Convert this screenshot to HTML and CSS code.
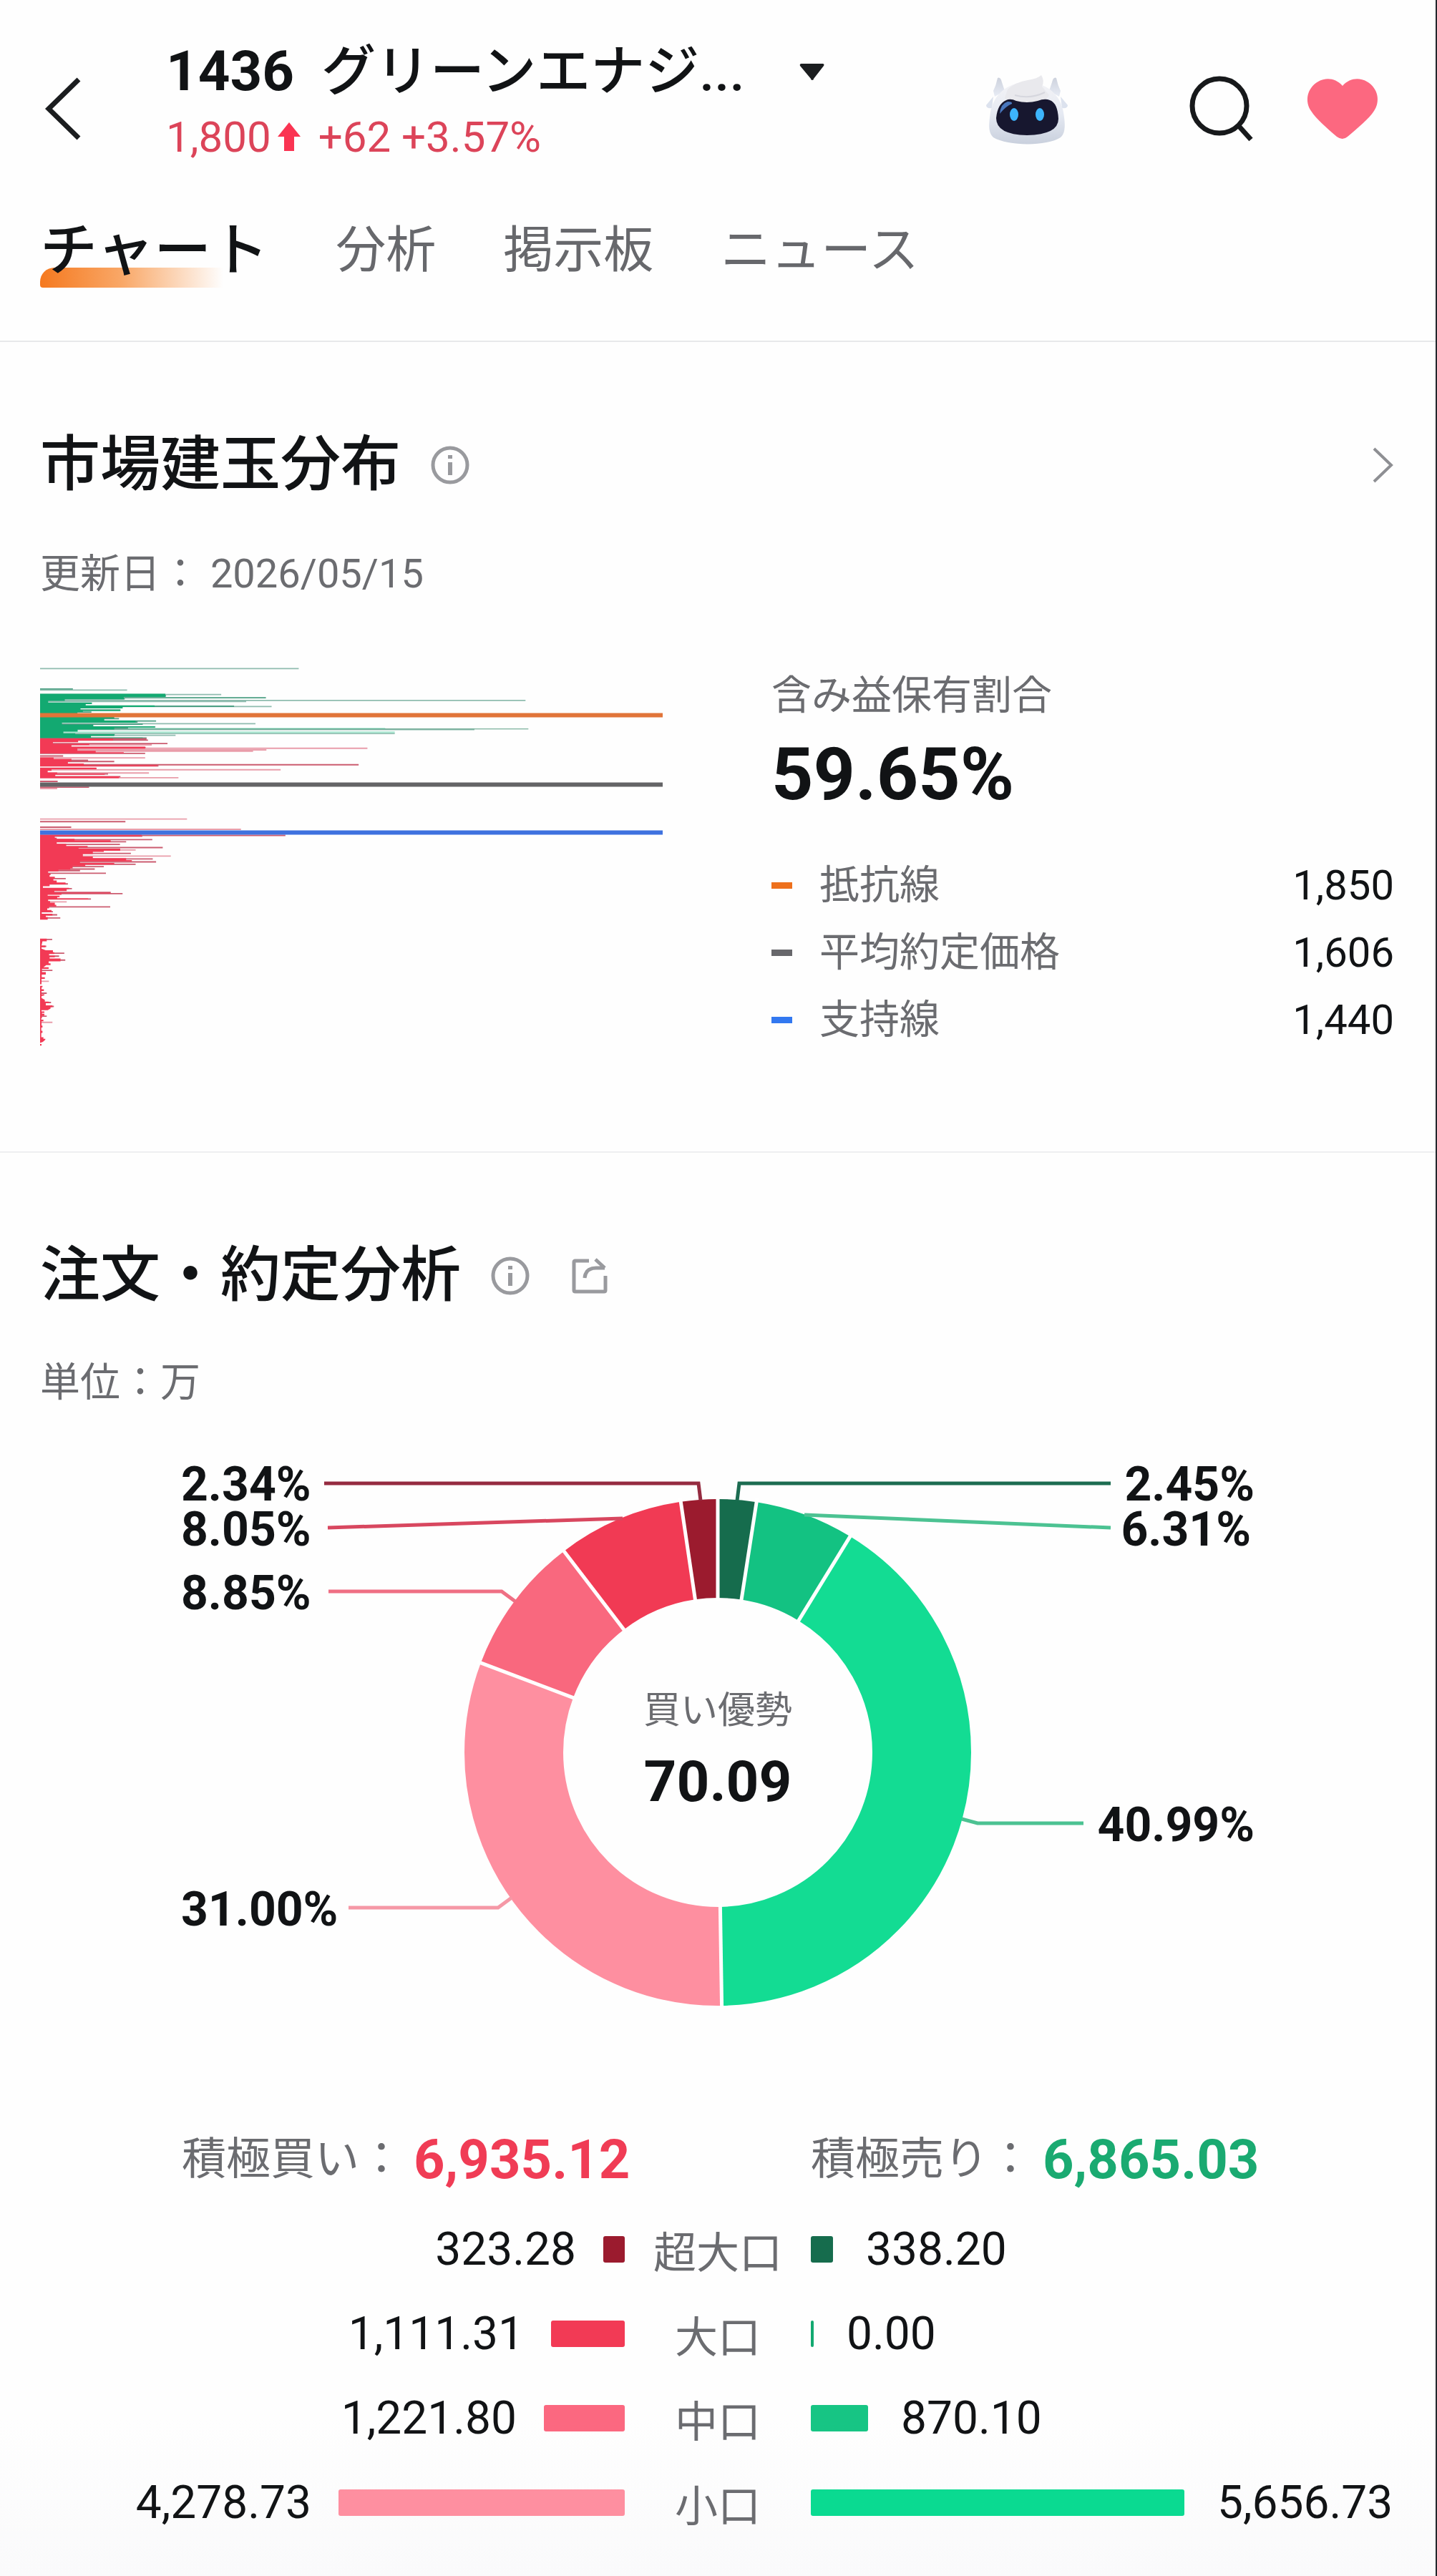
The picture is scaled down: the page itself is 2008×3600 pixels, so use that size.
FILE: index.html
```html
<!DOCTYPE html>
<html lang="ja">
<head>
<meta charset="utf-8">
<meta name="viewport" content="width=device-width, initial-scale=1">
<title>1436 グリーンエナジ...</title>
<link rel="stylesheet" href="styles.css">
</head>
<body>
<div class="app">
  <header class="topbar">
    <button class="icon-button" type="button" aria-label="戻る">
      <svg width="60" height="92" viewBox="0 0 60 92" fill="none" stroke="#1b1d1f" stroke-width="7"><path d="M54 5 12 46l42 41"/></svg>
    </button>
    <div class="quote">
      <button class="symbol" type="button">
        <span class="code">1436</span>
        <span class="name">グリーンエナジ...</span>
        <svg class="caret" width="36" height="24" viewBox="0 0 36 24"><path d="M3 1h30a2 2 0 0 1 1 3L20 22a2 2 0 0 1-4 0L1 4a2 2 0 0 1 2-3z" fill="#1b1d1f"/></svg>
      </button>
      <p class="price">
        <span>1,800</span>
        <svg class="up" width="34" height="42" viewBox="0 0 34 42"><path d="M17 0 33 20H24V40H10V20H1z" fill="#fa3452"/></svg>
        <span class="change">+62 +3.57%</span>
      </p>
    </div>
    <div class="actions">
      <button class="icon-button assistant" type="button" aria-label="アシスタント">
        <svg width="130" height="110" viewBox="0 0 130 110">
          <defs>
            <linearGradient id="shell" x1="0" y1="0" x2="0" y2="1"><stop offset="0" stop-color="#f3f3f6"/><stop offset=".5" stop-color="#e6eaf3"/><stop offset="1" stop-color="#c9d0dd"/></linearGradient>
            <linearGradient id="horn" x1="0" y1="0" x2="0" y2="1"><stop offset="0" stop-color="#cdd2dd"/><stop offset="1" stop-color="#e8ecf5"/></linearGradient>
          </defs>
          <path d="M24 12q4-2 6 6l4 12-14 8-2-8q4-8 6-18zM106 12q-4-2-6 6l-4 12 14 8 2-8q-4-8-6-18z" fill="url(#horn)"/>
          <path d="M18 38 8 50q0 5 8 4zM112 38l10 12q0 5-8 4z" fill="#dce2ee"/>
          <path d="M65 18c-28 0-47 18-51 42-2 14-4 28 4 35 20 12 74 13 94 0 8-7 6-22 4-35-4-24-23-42-51-42z" fill="url(#shell)"/>
          <path d="M38 28q10-10 28-13 14-2 19-7 5 8 1 16l10 12q-8 14-30 14T34 40z" fill="#e9e9ed"/>
          <path d="M48 36q22 6 42-4" fill="none" stroke="#d6d7de" stroke-width="2"/>
          <path d="M36 43q6-3 14 1 15 4 30 0 10-4 17-1 11 4 12 26 0 22-44 23Q22 91 22 68q2-20 14-25z" fill="#17172f"/>
          <path d="M27 62q1-14 11-17 7 0 6 3-8 3-17 14z" fill="#4876bd"/>
          <ellipse cx="47" cy="63" rx="6" ry="9" fill="#3db4fb"/><ellipse cx="83" cy="63" rx="6" ry="9" fill="#3db4fb"/>
        </svg>
      </button>
      <button class="icon-button" type="button" aria-label="検索">
        <svg width="100" height="100" viewBox="0 0 100 100" fill="none" stroke="#17191b" stroke-width="7"><circle cx="49" cy="46" r="38"/><path d="m75 73 18 20"/></svg>
      </button>
      <button class="icon-button" type="button" aria-label="お気に入り">
        <svg width="108" height="92" viewBox="0 0 108 92"><path d="M54 14C44 3 31 2 20 8 4 17 1 36 10 49c7 11 21 23 36 36q8 6 15 0c15-13 30-25 37-36 9-13 6-32-10-41C77 2 64 3 54 14z" fill="#fc6880"/></svg>
      </button>
    </div>
  </header>

  <nav class="tabs">
    <a class="tab active" href="#chart" aria-current="page"><span>チャート</span></a>
    <a class="tab" href="#analysis">分析</a>
    <a class="tab" href="#board">掲示板</a>
    <a class="tab" href="#news">ニュース</a>
  </nav>

  <main>
    <section class="section" id="chart">
      <div class="heading">
        <h2>市場建玉分布</h2>
        <button class="icon-button" type="button" aria-label="情報">
          <svg width="54" height="54" viewBox="0 0 54 54" fill="none" stroke="#999a9e" stroke-width="5"><circle cx="27" cy="27" r="24"/><path d="M27 23v18M27 13v5" stroke-width="6"/></svg>
        </button>
        <a class="more" href="#positions" aria-label="詳細">
          <svg width="32" height="52" viewBox="0 0 32 52" fill="none" stroke="#8e8f93" stroke-width="4"><path d="m4 3 24 23L4 49"/></svg>
        </a>
      </div>
      <p class="caption">更新日： 2026/05/15</p>
      <div class="distribution">
        <svg class="histogram" viewBox="48 80 2619 1438" preserveAspectRatio="none" role="img" aria-label="市場建玉分布">
          <g fill="none" stroke-width="5">
            <path stroke="#8fbcaf" d="M48 92H1136M48 173H414M48 190H810M48 212H2090M48 216H915M48 235H1022M48 300H954M48 322H1875M48 337H1540M48 344H618"/>
            <path stroke="#a5e6cf" d="M48 332H1540M48 318H1500"/>
            <path stroke="#4c9f83" d="M48 169H186M48 195H578M48 202H998M48 206H404M48 234H864M48 239H395M48 248H386M48 256H264M48 281H380M48 290H536M48 294H458M48 302H480M48 312H533M48 317H418M48 341H362M48 354H496"/>
            <path stroke="#579c82" stroke-width="3" d="M48 320H2102"/>
          </g>
          <path fill="#13a971" d="M48 187H575V199H400V208H152V214H82V220H266V226H240V231H530V237H395V242H218V248H386V252H228V256H205V262H360V280H318V288H450V296H140V304H272V310H530V314H360V322H206V330H146V336H196V340H360V346H262V352H480V356H48z"/>
          <g fill="none" stroke-width="5">
            <path stroke="#e99daa" d="M48 380H518M48 393H1425M48 399H1000M48 404H944M48 429H490M48 474H1060M48 486H506M48 504H630M48 545H120M48 660H666M48 699H893M48 777H450M48 800H598M48 973H160M48 1273H85M48 1428H100"/>
            <path stroke="#cb5c70" d="M48 357H496M48 362H502M48 375H584M48 390H492M48 412H490M48 422H145M48 438H250M48 443H360M48 455H1388M48 459H546M48 469H285M48 490H334M48 500H386M48 518H122M48 540H254M48 670H407M48 691H179M48 722H1080M48 725H478M48 738H520M48 746H410M48 756H384M48 768H564M48 790H430M48 811H522M48 822H536M48 831H450M48 840H316M48 849H278M48 855H216M48 865H325M48 885H156M48 905H165M48 923H182M48 937H345M48 942H395M48 962H262M48 992H343M48 1010H102M48 1022H120M48 1034H133M48 1115H99M48 1141H74M48 1167H150M48 1178H128M48 1193H154M48 1232H100M48 1318H76M48 1353H94M48 1368H106M48 1405H76"/>
          </g>
          <path fill="#f23a55" d="M48 356H355V364H208V370H102V376H255V381H180V387H490V394H205V402H282V408H400V412H48zM48 427H105V433H180V442H165V450H232V457H540V461H48zM48 466H285V472H96V478H80V484H120V489H320V493H112V499H380V506H48zM48 719H475V725H110V731H118V735H193V740H345V747H118V754H158V762H248V768H210V772H385V780H316V784H270V792H228V802H270V808H410V815H434V820H216V826H360V832H238V838H185V846H175V852H125V858H82V866H92V872H88V878H110V884H104V892H118V900H155V907H88V914H60V920H170V925H160V932H108V938H345V941H138V946H80V950H130V955H120V960H250V964H82V970H90V976H110V984H116V990H86V998H78V1004H96V1012H55V1018H100V1025H72V1030H80V1040H48zM48 1112H76V1122H58L54 1138H70V1144H54V1150L72 1156H102V1163H108V1170H86V1176H110V1182H88V1187H134V1198H84V1205H92V1212H74L62 1220H84V1226H56V1238H72V1248H55V1258H68V1264H54V1284H48zM48 1290H58V1296H54V1303H64V1310H54V1322H66V1326L48 1330zM48 1328H54V1336L68 1343V1350H84V1356H72V1364H100V1371H92V1376L80 1382H54V1387H66V1392H56V1396H66V1403H56V1412H53V1418H62V1424H54V1440H58V1448H53V1460H58V1468H53V1484H62V1490H70V1494L60 1502L48 1506zM48 1510H54V1516H48z"/>
          <path fill="none" stroke="#e17439" stroke-width="16" d="M48 268H2667"/>
          <path fill="none" stroke="#646466" stroke-width="16" d="M48 530H2667"/>
          <path fill="none" stroke="#3f72df" stroke-width="16" d="M48 711H2667"/>
        </svg>
        <div class="stats">
          <p class="stat-label">含み益保有割合</p>
          <p class="stat-value">59.65%</p>
          <dl class="levels">
            <div class="level"><dt class="resistance">抵抗線</dt><dd>1,850</dd></div>
            <div class="level"><dt class="average">平均約定価格</dt><dd>1,606</dd></div>
            <div class="level"><dt class="support">支持線</dt><dd>1,440</dd></div>
          </dl>
        </div>
      </div>
    </section>

    <section class="section orders" id="analysis">
      <div class="heading">
        <h2>注文・約定分析</h2>
        <button class="icon-button" type="button" aria-label="情報">
          <svg width="54" height="54" viewBox="0 0 54 54" fill="none" stroke="#999a9e" stroke-width="5"><circle cx="27" cy="27" r="24"/><path d="M27 23v18M27 13v5" stroke-width="6"/></svg>
        </button>
        <button class="icon-button share" type="button" aria-label="共有">
          <svg width="52" height="54" viewBox="0 0 52 54" fill="none" stroke="#999a9e" stroke-width="5"><path d="M25 6H6q-2 0-2 2v39q0 2 2 2h40q2 0 2-2V27"/><path d="M19 30q1-14 16-14h12M34 4l13 12" stroke-linejoin="round"/></svg>
        </button>
      </div>
      <p class="caption unit">単位：万</p>

      <svg class="donut" viewBox="0 1972 2006 998" role="img" aria-label="買い優勢 70.09">
        <g fill="none" stroke-width="138" transform="rotate(-90 1003 2449)">
          <circle cx="1003" cy="2449" r="285" pathLength="100" stroke="#9b1b2e" stroke-dasharray="2.35 97.65" stroke-dashoffset="-97.65"/>
          <circle cx="1003" cy="2449" r="285" pathLength="100" stroke="#166c4d" stroke-dasharray="2.45 97.55"/>
          <circle cx="1003" cy="2449" r="285" pathLength="100" stroke="#13c282" stroke-dasharray="6.31 93.69" stroke-dashoffset="-2.45"/>
          <circle cx="1003" cy="2449" r="285" pathLength="100" stroke="#13dc93" stroke-dasharray="40.99 59.01" stroke-dashoffset="-8.76"/>
          <circle cx="1003" cy="2449" r="285" pathLength="100" stroke="#fe8fa0" stroke-dasharray="31 69" stroke-dashoffset="-49.75"/>
          <circle cx="1003" cy="2449" r="285" pathLength="100" stroke="#f9687e" stroke-dasharray="8.85 91.15" stroke-dashoffset="-80.75"/>
          <circle cx="1003" cy="2449" r="285" pathLength="100" stroke="#f13a54" stroke-dasharray="8.05 91.95" stroke-dashoffset="-89.6"/>
        </g>
        <g stroke="#fff" stroke-width="5">
          <path d="M1003 2090v148"/>
          <path d="M1003 2090v148" transform="rotate(8.8 1003 2449)"/>
          <path d="M1003 2090v148" transform="rotate(31.5 1003 2449)"/>
          <path d="M1003 2090v148" transform="rotate(179.1 1003 2449)"/>
          <path d="M1003 2090v148" transform="rotate(290.7 1003 2449)"/>
          <path d="M1003 2090v148" transform="rotate(322.6 1003 2449)"/>
          <path d="M1003 2090v148" transform="rotate(351.6 1003 2449)"/>
        </g>
        <g fill="none" stroke-width="5">
          <path stroke="#952b40" d="M453 2073H976L979 2097"/>
          <path stroke="#d8475f" d="M458 2135 870 2122"/>
          <path stroke="#ef6f84" d="M459 2224H701L720 2238"/>
          <path stroke="#f598a6" d="M487 2666H696L715 2652"/>
          <path stroke="#1c6c51" d="M1552 2073H1033L1030 2097"/>
          <path stroke="#4cc292" d="M1552 2135 1124 2117"/>
          <path stroke="#4cc292" d="M1514 2548H1366L1344 2542"/>
        </g>
        <g class="slice-label">
          <text x="253" y="2097">2.34%</text>
          <text x="253" y="2160">8.05%</text>
          <text x="253" y="2249">8.85%</text>
          <text x="253" y="2691">31.00%</text>
        </g>
        <g class="slice-label end">
          <text x="1753" y="2097">2.45%</text>
          <text x="1748" y="2160">6.31%</text>
          <text x="1753" y="2573">40.99%</text>
        </g>
        <text class="donut-label" x="1003" y="2408">買い優勢</text>
        <text class="donut-value" x="1003" y="2517">70.09</text>
      </svg>

      <div class="totals">
        <p>積極買い：<strong class="buy">6,935.12</strong></p>
        <p>積極売り：<strong class="sell">6,865.03</strong></p>
      </div>

      <table class="breakdown">
        <tbody>
          <tr>
            <td><div class="cell left"><span>323.28</span><i class="bar buy-xl" style="width:30px"></i></div></td>
            <th scope="row">超大口</th>
            <td><div class="cell"><i class="bar sell-xl" style="width:31px"></i><span>338.20</span></div></td>
          </tr>
          <tr>
            <td><div class="cell left"><span>1,111.31</span><i class="bar buy-l" style="width:103px"></i></div></td>
            <th scope="row">大口</th>
            <td><div class="cell"><i class="bar sell-l" style="width:4px"></i><span>0.00</span></div></td>
          </tr>
          <tr>
            <td><div class="cell left"><span>1,221.80</span><i class="bar buy-m" style="width:113px"></i></div></td>
            <th scope="row">中口</th>
            <td><div class="cell"><i class="bar sell-m" style="width:80px"></i><span>870.10</span></div></td>
          </tr>
          <tr>
            <td><div class="cell left"><span>4,278.73</span><i class="bar buy-s" style="width:400px"></i></div></td>
            <th scope="row">小口</th>
            <td><div class="cell"><i class="bar sell-s" style="width:522px"></i><span>5,656.73</span></div></td>
          </tr>
        </tbody>
      </table>
    </section>
  </main>
</div>
</body>
</html>
```
FILE: styles.css
```css
* {
  box-sizing: border-box;
}

body {
  margin: 0;
  background: #fefefe;
  color: #111315;
  font-family: Roboto, "Noto Sans CJK JP", sans-serif;
}

h2,
p,
dl,
dd {
  margin: 0;
}

button {
  padding: 0;
  border: 0;
  background: none;
  color: inherit;
  font: inherit;
}

svg {
  display: block;
}

.app {
  min-height: 100vh;
  border-right: 2px solid #23272c;
  background: linear-gradient(to top, #fafafb, #fefefe 220px);
}

.icon-button {
  flex: none;
}

/* Top bar */
.topbar {
  display: flex;
  align-items: center;
  padding: 52px 76px 0 56px;
}

.quote {
  margin-left: 116px;
  padding-bottom: 20px;
}

.symbol {
  display: flex;
  align-items: center;
  line-height: 96px;
  white-space: nowrap;
}

.code {
  font-size: 78px;
  font-weight: 700;
}

.name {
  margin-left: 38px;
  font-size: 76px;
  font-weight: 500;
}

.caret {
  margin-left: 76px;
}

.price {
  display: flex;
  align-items: center;
  margin-top: 4px;
  color: #dc4459;
  font-size: 60px;
  line-height: 80px;
}

.up {
  margin: 0 24px 0 8px;
}

.actions {
  display: flex;
  align-items: center;
  gap: 67px;
  margin-left: auto;
}

.assistant {
  margin-right: 88px;
}

/* Tabs */
.tabs {
  display: flex;
  gap: 94px;
  padding: 50px 56px 78px;
  border-bottom: 2px solid #e8e9eb;
}

.tab {
  color: #67686c;
  font-size: 70px;
  line-height: 96px;
  text-decoration: none;
}

.tab.active {
  position: relative;
  color: #111315;
  font-size: 80px;
  font-weight: 500;
}

.tab.active::before {
  content: "";
  position: absolute;
  left: 0;
  bottom: -4px;
  width: 256px;
  height: 28px;
  border-radius: 20px 0 0 4px;
  background: linear-gradient(to right, #f5791f, #f9a868 45%, rgba(254, 240, 230, 0));
}

.tab.active span {
  position: relative;
}

/* Sections */
.section {
  padding: 112px 58px 137px 56px;
  border-bottom: 2px solid #eeeff1;
}

.orders {
  padding: 112px 0 36px;
  border-bottom: 0;
}

.heading {
  display: flex;
  align-items: center;
  gap: 42px;
}

.orders .heading,
.unit {
  padding: 0 56px;
}

h2 {
  font-size: 84px;
  font-weight: 500;
  line-height: 120px;
}

.more {
  margin-left: auto;
}

.share {
  margin-left: 16px;
}

.caption {
  margin-top: 52px;
  color: #6b6c70;
  font-size: 56px;
  line-height: 80px;
}

.orders .caption {
  margin-top: 49px;
}

/* Position distribution */
.distribution {
  display: grid;
  grid-template-columns: 1fr 1fr;
  gap: 152px;
  align-items: start;
  margin-top: 88px;
}

.histogram {
  width: 100%;
  height: 532px;
}

.stats {
  padding-top: 6px;
}

.stat-label {
  color: #6b6c70;
  font-size: 56px;
  line-height: 72px;
}

.stat-value {
  margin-top: 14px;
  font-size: 102px;
  font-weight: 700;
  line-height: 120px;
}

.levels {
  margin-top: 48px;
}

.level {
  display: flex;
  justify-content: space-between;
  font-size: 58px;
  line-height: 94px;
}

.level dt {
  display: flex;
  align-items: center;
  gap: 38px;
  color: #6b6c70;
  font-size: 56px;
}

.level dt::before {
  content: "";
  width: 29px;
  height: 9px;
  background: currentColor;
}

.level .resistance::before {
  background: #ee701c;
}

.level .average::before {
  background: #67676b;
}

.level .support::before {
  background: #3278f0;
}

/* Donut */
.donut {
  width: 100%;
  height: auto;
}

.slice-label {
  font-size: 66px;
  font-weight: 700;
  fill: #111315;
}

.slice-label.end {
  text-anchor: end;
}

.donut-label {
  font-size: 52px;
  text-anchor: middle;
  fill: #6b6c70;
}

.donut-value {
  font-size: 80px;
  font-weight: 700;
  text-anchor: middle;
  fill: #111315;
}

/* Totals and breakdown */
.totals {
  display: grid;
  grid-template-columns: 1fr 1fr;
  gap: 6px;
  padding-left: 254px;
  color: #6b6c70;
  font-size: 62px;
  line-height: 96px;
}

.totals p {
  display: flex;
  align-items: center;
}

.totals strong {
  margin-left: 14px;
  font-size: 76px;
}

.buy {
  color: #f03c55;
}

.sell {
  color: #1aaa71;
}

.breakdown {
  width: 100%;
  margin-top: 18px;
  border-collapse: collapse;
  table-layout: fixed;
}

.breakdown td,
.breakdown th {
  height: 118px;
  padding: 0;
}

.breakdown th {
  width: 260px;
  color: #6b6c70;
  font-size: 60px;
  font-weight: 400;
}

.cell {
  display: flex;
  align-items: center;
  gap: 46px;
  font-size: 64px;
}

.cell.left {
  justify-content: flex-end;
  gap: 38px;
}

.bar {
  flex: none;
  height: 37px;
  border-radius: 3px;
}

.buy-xl { background: #9b1b2e; }
.buy-l { background: #f23a55; }
.buy-m { background: #fb6880; }
.buy-s { background: #fe8fa0; }
.sell-xl { background: #166c4d; }
.sell-l { background: #13a971; }
.sell-m { background: #17c584; }
.sell-s { background: #0ada91; }
```
